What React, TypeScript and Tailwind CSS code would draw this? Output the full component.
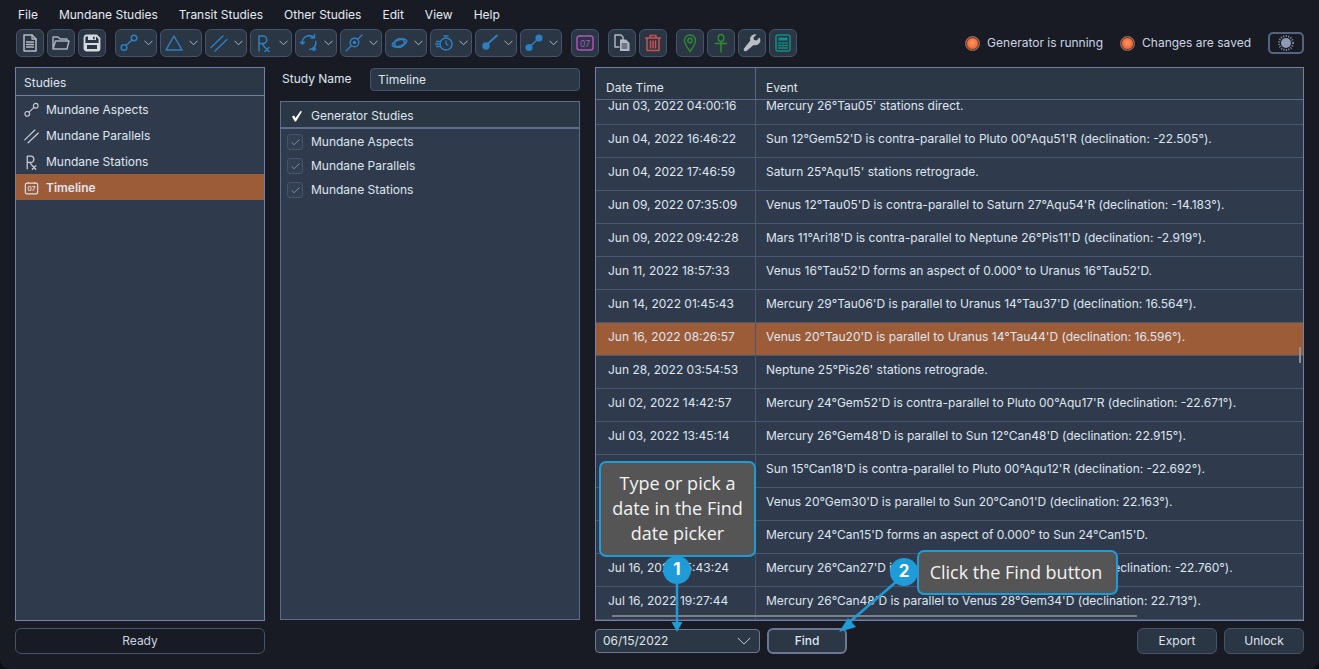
import { Check } from "lucide-react";
import type { ReactNode } from "react";

const BLUE = "#2e7fc0";

const menus = ["File", "Mundane Studies", "Transit Studies", "Other Studies", "Edit", "View", "Help"];

const rows = [
  ["Jun 03, 2022 04:00:16", "Mercury 26°Tau05' stations direct."],
  ["Jun 04, 2022 16:46:22", "Sun 12°Gem52'D is contra-parallel to Pluto 00°Aqu51'R (declination: -22.505°)."],
  ["Jun 04, 2022 17:46:59", "Saturn 25°Aqu15' stations retrograde."],
  ["Jun 09, 2022 07:35:09", "Venus 12°Tau05'D is contra-parallel to Saturn 27°Aqu54'R (declination: -14.183°)."],
  ["Jun 09, 2022 09:42:28", "Mars 11°Ari18'D is contra-parallel to Neptune 26°Pis11'D (declination: -2.919°)."],
  ["Jun 11, 2022 18:57:33", "Venus 16°Tau52'D forms an aspect of 0.000° to Uranus 16°Tau52'D."],
  ["Jun 14, 2022 01:45:43", "Mercury 29°Tau06'D is parallel to Uranus 14°Tau37'D (declination: 16.564°)."],
  ["Jun 16, 2022 08:26:57", "Venus 20°Tau20'D is parallel to Uranus 14°Tau44'D (declination: 16.596°)."],
  ["Jun 28, 2022 03:54:53", "Neptune 25°Pis26' stations retrograde."],
  ["Jul 02, 2022 14:42:57", "Mercury 24°Gem52'D is contra-parallel to Pluto 00°Aqu17'R (declination: -22.671°)."],
  ["Jul 03, 2022 13:45:14", "Mercury 26°Gem48'D is parallel to Sun 12°Can48'D (declination: 22.915°)."],
  ["Jul 07, 2022 02:18:36", "Sun 15°Can18'D is contra-parallel to Pluto 00°Aqu12'R (declination: -22.692°)."],
  ["Jul 11, 2022 21:04:50", "Venus 20°Gem30'D is parallel to Sun 20°Can01'D (declination: 22.163°)."],
  ["Jul 16, 2022 06:31:12", "Mercury 24°Can15'D forms an aspect of 0.000° to Sun 24°Can15'D."],
  ["Jul 16, 2022 15:43:24", "Mercury 26°Can27'D is contra-parallel to Pluto 00°Aqu11'R (declination: -22.760°)."],
  ["Jul 16, 2022 19:27:44", "Mercury 26°Can48'D is parallel to Venus 28°Gem34'D (declination: 22.713°)."],
];

function Ico({ children, size = 20 }: { children: ReactNode; size?: number }) {
  return (
    <svg width={size} height={size} viewBox="0 0 20 20" fill="none" strokeLinecap="round" strokeLinejoin="round">
      {children}
    </svg>
  );
}

function Chev({ w = 9, color = "#aeb6c6" }: { w?: number; color?: string }) {
  return (
    <svg width={w} height={w / 2 + 1} viewBox="0 0 18 10" fill="none">
      <path d="M1 1 9 9 17 1" stroke={color} strokeWidth={18 / w} />
    </svg>
  );
}

function AspectIcon({ color = BLUE, w = 1.5, fill = "none" }: { color?: string; w?: number; fill?: string }) {
  return (
    <Ico>
      <circle cx="5" cy="14.5" r="2.8" stroke={color} strokeWidth={w} fill={fill} />
      <circle cx="15" cy="5" r="2.8" stroke={color} strokeWidth={w} fill={fill} />
      <path d="M7 12.500 13 7" stroke={color} strokeWidth={w} />
    </Ico>
  );
}
function ParallelIcon({ color = BLUE }: { color?: string }) {
  return (
    <Ico>
      <path d="M2 14.500 14 3M6 18 18 6.500" stroke={color} strokeWidth="1.400" />
    </Ico>
  );
}
function RetroIcon({ color = BLUE }: { color?: string }) {
  return (
    <Ico>
      <path d="M5 18V3h4a3.700 3.700 0 0 1 0 7.500H5M8 10.500l3 4M11 14.500l4 4M15 14.500l-4 4" stroke={color} strokeWidth="1.500" />
    </Ico>
  );
}
function CalIcon({ color, size = 22 }: { color: string; size?: number }) {
  return (
    <svg width={size} height={size} viewBox="0 0 22 22" fill="none">
      <rect x="3" y="4" width="16" height="14" rx="2.500" stroke={color} strokeWidth="1.500" />
      <path d="M7 3v1.500M15 3v1.500" stroke={color} strokeWidth="1.500" />
      <text x="11" y="14.800" textAnchor="middle" fontSize="8.500" fontFamily="Inter, sans-serif" fill={color}>
        07
      </text>
    </svg>
  );
}

const dropIcons: ReactNode[] = [
  <AspectIcon key="a" />,
  <Ico key="b">
    <path d="M10 3 18 17H2Z" stroke={BLUE} strokeWidth="1.500" />
  </Ico>,
  <ParallelIcon key="c" />,
  <RetroIcon key="d" />,
  <Ico key="e">
    <path d="M3.500 11a7 7 0 0 1 11.500-6.500M16.800 8.500a7 7 0 0 1-6 8M15.500 1.500v3.500h-3.500M3.500 11l-2-1.800M3.500 11l2-1.800" stroke={BLUE} strokeWidth="1.500" />
    <circle cx="15" cy="16" r="2" fill={BLUE} />
  </Ico>,
  <Ico key="f">
    <circle cx="10.500" cy="9.500" r="4.300" stroke={BLUE} strokeWidth="1.400" />
    <circle cx="10.500" cy="9.500" r="1.800" fill={BLUE} />
    <path d="M2 18 7 13M14 6 18 2" stroke={BLUE} strokeWidth="1.400" />
  </Ico>,
  <Ico key="g">
    <ellipse cx="10.500" cy="10" rx="7.500" ry="3.200" transform="rotate(-18 10.500 10)" stroke={BLUE} strokeWidth="1.700" />
    <ellipse cx="10.500" cy="10" rx="5" ry="4.300" transform="rotate(-18 10.500 10)" stroke={BLUE} strokeWidth="1.500" />
  </Ico>,
  <Ico key="h">
    <circle cx="12" cy="11" r="6" stroke={BLUE} strokeWidth="1.500" />
    <path d="M12 8v3l1.800 1.200M10 3h4M2.500 8.500h3M1.500 11h3M2.500 13.500h3" stroke={BLUE} strokeWidth="1.400" />
  </Ico>,
  <Ico key="i">
    <circle cx="7" cy="13" r="3.700" fill={BLUE} />
    <path d="M9 10.500 18 2.500" stroke={BLUE} strokeWidth="2" />
  </Ico>,
  <AspectIcon key="j" w={1.600} fill={BLUE} />,
];

function ToolBtn({ children, className = "w-7" }: { children: ReactNode; className?: string }) {
  return (
    <button className={`flex h-7 items-center justify-center rounded-md border border-[#46536c] bg-[#2b3644] ${className}`}>
      {children}
    </button>
  );
}

function DropBtn({ children }: { children: ReactNode }) {
  return (
    <button className="flex h-7 w-[42px] items-center justify-between rounded-md border border-[#46536c] bg-[#2b3644] pl-[3px] pr-[3px]">
      {children}
      <Chev />
    </button>
  );
}

function Lamp() {
  return (
    <span className="h-[15px] w-[15px] shrink-0 rounded-full border-[1.5px] border-[#8a766e] bg-[radial-gradient(circle_at_50%_45%,#ff9466,#ee6a36_55%,#c7431a)] shadow-[inset_0_0_0_1px_#5f3527]" />
  );
}

export default function App() {
  return (
    <div className="h-[669px] w-[1319px] overflow-hidden bg-[#0d0e11] font-['Inter','Liberation_Sans',sans-serif] text-[12px] text-[#dfe5ef]">
      <div className="relative flex h-full flex-col rounded-b-[10px] bg-[#181b24]">
        {/* menu */}
        <div className="flex h-[28px] items-center gap-[21px] pl-[18px] pt-[1px] text-[#e6ebf3]">
          {menus.map((m) => (
            <span key={m}>{m}</span>
          ))}
        </div>

        {/* toolbar */}
        <div className="flex h-[30px] items-center pl-[16px] pr-[15px]">
          <div className="flex gap-[3px]">
            <ToolBtn>
              <Ico>
                <path d="M4 2h8l4 4v12H4Z" stroke="#b4bac5" strokeWidth="1.500" />
                <path d="M12 2v4h4M6.500 9h7M6.500 11.500h7M6.500 14h7" stroke="#b4bac5" strokeWidth="1.300" />
              </Ico>
            </ToolBtn>
            <ToolBtn>
              <Ico>
                <path d="M2 16V4h5l2 2h7v2M2 16l2.500-8H18l-2 8Z" stroke="#a9afba" strokeWidth="1.500" />
              </Ico>
            </ToolBtn>
            <ToolBtn>
              <Ico>
                <path d="M2.500 4.500a2 2 0 0 1 2-2h10l3 3v10a2 2 0 0 1-2 2h-11a2 2 0 0 1-2-2Z" stroke="#d5d9e0" strokeWidth="1.800" />
                <path d="M3 10h14v7H3ZM6 3h8v4H6Z" fill="#d5d9e0" />
                <path d="M11 3.800h1.600v2.400H11Z" fill="#2b3644" />
                <path d="M5 12h10v4H5Z" fill="#2b3644" />
              </Ico>
            </ToolBtn>
          </div>
          <div className="ml-[9px] flex gap-[3px]">
            {dropIcons.map((ic, i) => (
              <DropBtn key={i}>{ic}</DropBtn>
            ))}
          </div>
          <div className="ml-[9px]">
            <ToolBtn>
              <CalIcon color="#a955b8" />
            </ToolBtn>
          </div>
          <div className="ml-[9px] flex gap-[3px]">
            <ToolBtn>
              <Ico>
                <path d="M3 2h6l2 2v3M3 2v12h4" stroke="#b4bac5" strokeWidth="1.400" />
                <path d="M8 6.500h6l3.500 3.500v8H8Z" fill="#b4bac5" />
                <path d="M10 11h5M10 13h5M10 15h5" stroke="#2b3644" strokeWidth="1" />
              </Ico>
            </ToolBtn>
            <ToolBtn>
              <Ico>
                <path d="M2.500 5h15M7 5V2.500h6V5M4 5v12.500h12V5M7.500 8v7M10 8v7M12.500 8v7" stroke="#c9504f" strokeWidth="1.500" />
              </Ico>
            </ToolBtn>
          </div>
          <div className="ml-[9px] flex gap-[3px]">
            <ToolBtn>
              <Ico>
                <path d="M10 18.500C7 14.500 4.500 11 4.500 7.500a5.500 5.500 0 0 1 11 0C15.500 11 13 14.500 10 18.500Z" stroke="#2f8a32" strokeWidth="1.400" />
                <circle cx="10" cy="7.500" r="2.200" stroke="#2f8a32" strokeWidth="1.400" />
              </Ico>
            </ToolBtn>
            <ToolBtn>
              <Ico>
                <ellipse cx="10" cy="5" rx="2.800" ry="3.500" stroke="#2f8a32" strokeWidth="1.400" />
                <path d="M10 8.500V19M4.500 10.500h11" stroke="#2f8a32" strokeWidth="1.500" />
              </Ico>
            </ToolBtn>
            <ToolBtn>
              <Ico>
                <path d="M17.500 4.500l-3 3-2.500-.500-.500-2.500 3-3a5 5 0 0 0-6.300 6.300L2 15.500a1.800 1.800 0 0 0 2.500 2.500l7.200-6A5 5 0 0 0 17.500 4.500Z" fill="#b9bec7" />
              </Ico>
            </ToolBtn>
            <ToolBtn>
              <Ico>
                <rect x="3" y="2" width="14" height="16" rx="2" stroke="#0f8f84" strokeWidth="1.500" />
                <path d="M5.500 4.500h9v3h-9Z" fill="#0f8f84" />
                <path d="M5.500 10h2M9 10h2M12.500 10h2M5.500 12.500h2M9 12.500h2M12.500 12.500h2M5.500 15h9" stroke="#0f8f84" strokeWidth="1.500" />
              </Ico>
            </ToolBtn>
          </div>
          <div className="ml-auto flex items-center">
            <Lamp />
            <span className="ml-[7px] text-[#cdd5e2]">Generator is running</span>
            <span className="ml-[17px] flex">
              <Lamp />
            </span>
            <span className="ml-[7px] text-[#cdd5e2]">Changes are saved</span>
            <button className="ml-[17px] flex h-[22px] w-[36px] items-center justify-center rounded-[5px] border-2 border-[#56637e] bg-[#181b24]">
              <svg width="16" height="16" viewBox="0 0 16 16">
                <circle cx="8" cy="8" r="5" fill="#8e9ab5" />
                <circle cx="8" cy="8" r="7" fill="none" stroke="#8e9ab5" strokeWidth="2" strokeDasharray="1 1.500" />
              </svg>
            </button>
          </div>
        </div>

        {/* body */}
        <div className="mt-[9px] flex gap-[15px] px-[15px]">
          {/* studies */}
          <div className="flex w-[250px] flex-col">
            <div className="h-[554px] border border-[#7180a6] bg-[#2f3b4d]">
              <div className="flex h-[28px] items-center border-b border-[#7180a6] bg-[#2b3744] pl-[8px] pt-[2px]">Studies</div>
              <div className="flex h-[26px] items-center gap-[6px] pl-[7px] pt-[2px]">
                <span className="flex w-[17px] justify-center"><AspectIcon color="#c6ccd6" w={1.300} /></span>
                Mundane Aspects
              </div>
              <div className="flex h-[26px] items-center gap-[6px] pl-[7px] pt-[2px]">
                <span className="flex w-[17px] justify-center"><ParallelIcon color="#c6ccd6" /></span>
                Mundane Parallels
              </div>
              <div className="flex h-[26px] items-center gap-[6px] pl-[7px] pt-[2px]">
                <span className="flex w-[17px] justify-center"><RetroIcon color="#c6ccd6" /></span>
                Mundane Stations
              </div>
              <div className="flex h-[26px] items-center gap-[6px] bg-[#9d5c38] pl-[7px] pt-[2px] font-semibold">
                <span className="flex w-[17px] justify-center"><CalIcon color="#dcdfe6" size={19} /></span>
                Timeline
              </div>
            </div>
            <div className="mt-[7px] flex h-[26px] items-center justify-center rounded-md border border-[#46536c] text-[#c9d2e0]">
              Ready
            </div>
          </div>

          {/* generator */}
          <div className="w-[300px]">
            <div className="flex h-[24px] items-center">
              <span className="ml-[2px] w-[88px] whitespace-nowrap">Study Name</span>
              <div className="flex h-[23px] w-[210px] items-center rounded-[4px] border border-[#46536c] bg-[#2b3744] pl-[7px] pt-[1px]">
                Timeline
              </div>
            </div>
            <div className="mt-[10px] h-[519px] border border-[#5f6d8d] bg-[#2f3b4d]">
              <div className="flex h-[27px] items-center border-b-2 border-[#5f6d8d] bg-[#2b3744] pl-[10px] pt-[2px]">
                <svg width="12" height="12" viewBox="0 0 12 12">
                  <path d="M1 6.500 3 5.500 4.500 8 9.500 1 11 1.500 5 11.500H3.800Z" fill="#ffffff" />
                </svg>
                <span className="ml-[8px]">Generator Studies</span>
              </div>
              <div className="pt-[1px]">
                {["Mundane Aspects", "Mundane Parallels", "Mundane Stations"].map((s) => (
                  <div key={s} className="flex h-[24px] items-center pl-[6px]">
                    <span className="flex h-[16px] w-[16px] items-center justify-center rounded-[3px] border border-[#46536c] bg-[#323e51]">
                      <Check size={11} strokeWidth={1.500} color="#a4acb9" />
                    </span>
                    <span className="ml-[8px] pb-[1px]">{s}</span>
                  </div>
                ))}
              </div>
            </div>
          </div>

          {/* timeline table */}
          <div className="flex w-[709px] flex-col">
            <div className="relative h-[554px] overflow-hidden border border-[#7180a6] bg-[#2f3b4d]">
              <div className="relative z-10 flex h-[32px] border-b border-[#5b6986] bg-[#2b3744] text-[#dfe5ef]">
                <div className="flex w-[160px] items-end border-r border-[#5b6986] pb-[2px] pl-[10px]">Date Time</div>
                <div className="flex items-end pb-[2px] pl-[10px]">Event</div>
              </div>
              <div className="-mt-[8px]">
                {rows.map(([d, e], i) => (
                  <div
                    key={d}
                    className={`flex h-[33px] items-center border-b border-[#4a5770] ${i === 7 ? "bg-[#9d5c38]" : ""}`}
                  >
                    <div className="flex h-full w-[160px] items-center border-r border-[#4a5770] pb-[5px] pl-[12px]">{d}</div>
                    <div className="pb-[5px] pl-[10px]">{e}</div>
                  </div>
                ))}
              </div>
              <div className="absolute bottom-[3px] left-[16px] h-[2px] w-[525px] bg-[#7b7f87]" />
              <div className="absolute right-[2px] top-[279px] h-[16px] w-[2px] bg-[#8b8f97]" />
            </div>
            <div className="mt-[7px] flex h-[26px] items-center">
              <div className="flex h-[24px] w-[165px] items-center justify-between rounded-[4px] border border-[#6a7896] bg-[#2b3744] pl-[7px] pr-[8px]">
                06/15/2022
                <Chev w={14} color="#c4cad6" />
              </div>
              <button className="ml-[7px] h-[26px] w-[80px] rounded-md border-2 border-[#6a7896] bg-[#2b3744] font-medium">Find</button>
              <button className="ml-auto h-[26px] w-[80px] rounded-md border border-[#46536c] bg-[#2b3644]">Export</button>
              <button className="ml-[7px] h-[26px] w-[80px] rounded-md border border-[#46536c] bg-[#2b3644]">Unlock</button>
            </div>
          </div>
        </div>

        {/* tutorial overlay */}
        <div className="absolute left-[599px] top-[461px] flex h-[96px] w-[157px] items-center justify-center rounded-[7px] border-[2.5px] border-[#1f9bd7] bg-[#555555] pb-[2px] text-center font-['Open_Sans',sans-serif] text-[18px] leading-[25px] text-[#f2f2f2]">
          Type or pick a
          <br />
          date in the Find
          <br />
          date picker
        </div>
        <div className="absolute left-[917px] top-[550px] flex h-[45px] w-[201px] items-center justify-center rounded-[7px] border-[2.5px] border-[#1f9bd7] bg-[#555555] pr-[3px] font-['Open_Sans',sans-serif] text-[18px] text-[#f2f2f2]">
          Click the Find button
        </div>
        <svg className="absolute left-0 top-0" width="1319" height="669" fill="none">
          <path d="M677 580V626" stroke="#1f9bd7" strokeWidth="2.500" />
          <path d="M671.500 622h11l-5.500 10Z" fill="#1f9bd7" />
          <path d="M896 582 846 625" stroke="#1f9bd7" strokeWidth="2.500" />
          <path d="M848 618 856 627 839 632Z" fill="#1f9bd7" />
        </svg>
        <div className="absolute left-[663px] top-[556px] flex h-[28px] w-[28px] items-center justify-center rounded-full bg-[#1f9bd7] text-[17px] font-bold text-white">1</div>
        <div className="absolute left-[890px] top-[558px] flex h-[28px] w-[28px] items-center justify-center rounded-full bg-[#1f9bd7] text-[17px] font-bold text-white">2</div>
      </div>
    </div>
  );
}
